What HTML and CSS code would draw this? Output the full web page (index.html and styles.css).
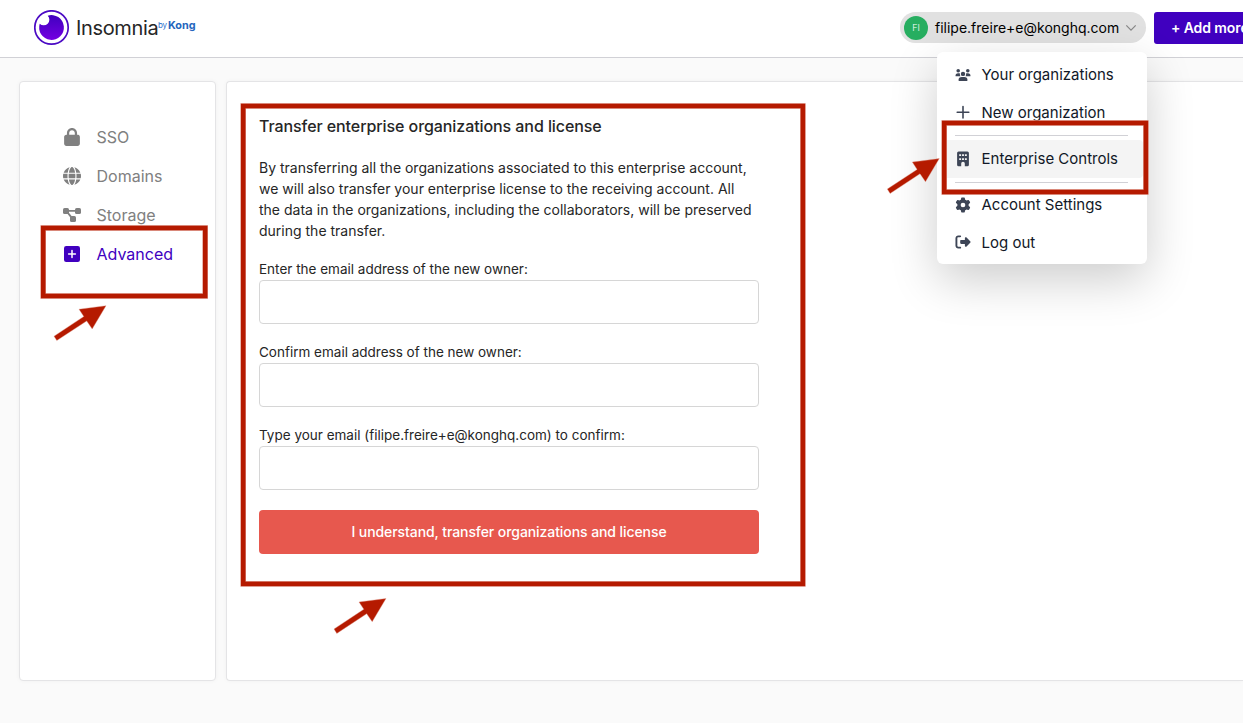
FILE: index.html
```html
<!DOCTYPE html>
<html lang="en">
<head>
<meta charset="utf-8">
<title>Insomnia by Kong</title>
<link rel="stylesheet" href="styles.css">
</head>
<body>
<header class="header">
  <div class="brand">
    <svg class="logo" width="36" height="36" viewBox="0 0 36 36">
      <defs><linearGradient id="g" x1="0" y1="0" x2="0" y2="1"><stop offset="0" stop-color="#4000bf"/><stop offset="1" stop-color="#7400e1"/></linearGradient></defs>
      <circle cx="17.500" cy="17.500" r="16.700" fill="#fff" stroke="#4b0ac4" stroke-width="1.700"/>
      <path d="M13.700 5.700A12.400 12.400 0 1 1 5.700 13.700A5.200 5.200 0 1 0 13.700 5.700Z" fill="url(#g)"/>
    </svg>
    <span class="brand-name">Insomnia</span><span class="brand-by">by</span><span class="brand-kong">Kong</span>
  </div>
  <div class="account">
    <span class="avatar">FI</span>
    <span class="account-email">filipe.freire+e@konghq.com</span>
    <svg class="chevron" width="12" height="8" viewBox="0 0 12 8"><path d="M1.300 1.300L6 6.200l4.700-4.900" fill="none" stroke="#888" stroke-width="1.200"/></svg>
    <nav class="menu">
      <a class="menu-item"><svg width="16" height="16" viewBox="0 0 16 16" fill="#3d4556"><circle cx="3.200" cy="3.700" r="1.800"/><circle cx="12.800" cy="3.700" r="1.800"/><circle cx="8" cy="6.900" r="2.200"/><path d="M.5 8.900a2.600 2.600 0 0 1 2.600-2.600h1.100q.5 0 .8.2a3.200 3.200 0 0 0 .5 2.800H1a.5.5 0 0 1-.5-.4zM15.500 8.900a2.600 2.600 0 0 0-2.600-2.600h-1.100q-.5 0-.8.2a3.200 3.200 0 0 1-.5 2.800H15a.5.5 0 0 0 .5-.4zM3.500 13.300a3.300 3.300 0 0 1 3.300-3.300h2.400a3.300 3.300 0 0 1 3.300 3.300q0 .7-.7.7H4.200q-.7 0-.7-.7z"/></svg><span>Your organizations</span></a>
      <a class="menu-item"><svg width="16" height="16" viewBox="0 0 16 16"><path d="M8 2.500v11.500M2.200 8.250h11.600" stroke="#3d4556" stroke-width="1.600" stroke-linecap="round"/></svg><span>New organization</span></a>
      <hr class="rule">
      <a class="menu-item active"><svg width="16" height="16" viewBox="0 0 16 16"><path fill="#3d4556" fill-rule="evenodd" d="M3.600.6h8.800q1.500 0 1.500 1.500v11.600q0 1.500-1.500 1.500H9.800v-2.600a1.800 1.800 0 0 0-3.600 0v2.600H3.600q-1.500 0-1.500-1.500V2.100Q2.100.6 3.600.6zM4.200 3.200v1.700h1.900V3.200zM7.050 3.200v1.700h1.900V3.200zM9.900 3.200v1.700h1.900V3.200zM4.200 7.200v1.700h1.900V7.200zM7.050 7.200v1.700h1.900V7.200zM9.900 7.200v1.700h1.900V7.200z"/></svg><span>Enterprise Controls</span></a>
      <hr class="rule">
      <a class="menu-item"><svg width="16" height="16" viewBox="-16 -16 544 544"><path fill="#3d4556" d="M495.900 166.600c3.200 8.700.5 18.400-6.400 24.600l-43.300 39.400c1.100 8.300 1.700 16.800 1.700 25.400s-.6 17.100-1.700 25.400l43.300 39.400c6.900 6.200 9.600 15.900 6.400 24.600c-4.400 11.900-9.700 23.300-15.800 34.300l-4.700 8.100c-6.600 11-14 21.400-22.100 31.200c-5.900 7.200-15.700 9.600-24.500 6.800l-55.700-17.700c-13.400 10.300-28.200 18.900-44 25.400l-12.500 57.100c-2 9.100-9 16.300-18.200 17.800c-13.800 2.300-28 3.500-42.500 3.500s-28.700-1.200-42.500-3.500c-9.200-1.500-16.200-8.700-18.200-17.800l-12.500-57.100c-15.800-6.500-30.600-15.100-44-25.400L83.100 425.900c-8.800 2.800-18.600.3-24.500-6.800c-8.100-9.800-15.500-20.200-22.100-31.200l-4.700-8.100c-6.100-11-11.400-22.400-15.800-34.300c-3.200-8.700-.5-18.400 6.400-24.600l43.300-39.400C64.600 273.100 64 264.600 64 256s.6-17.100 1.700-25.400L22.400 191.200c-6.900-6.200-9.600-15.900-6.400-24.600c4.400-11.900 9.700-23.300 15.800-34.300l4.700-8.100c6.600-11 14-21.400 22.100-31.200c5.900-7.200 15.700-9.600 24.500-6.800l55.700 17.700c13.400-10.300 28.200-18.900 44-25.400l12.500-57.100c2-9.100 9-16.300 18.200-17.800C227.300 1.200 241.500 0 256 0s28.700 1.200 42.500 3.500c9.200 1.500 16.200 8.700 18.200 17.800l12.500 57.100c15.800 6.500 30.600 15.100 44 25.400l55.700-17.700c8.800-2.800 18.600-.3 24.500 6.800c8.100 9.800 15.500 20.200 22.100 31.200l4.700 8.100c6.100 11 11.400 22.400 15.800 34.300zM256 336a80 80 0 1 0 0-160 80 80 0 1 0 0 160z"/></svg><span>Account Settings</span></a>
      <a class="menu-item"><svg width="16" height="16" viewBox="-16 -16 544 544"><path fill="#3d4556" d="M377.900 105.900L500.700 228.700c7.200 7.200 11.300 17.100 11.300 27.300s-4.100 20.100-11.300 27.300L377.900 406.100c-6.400 6.400-15 9.900-24 9.900c-18.700 0-33.900-15.200-33.900-33.900l0-62.100-128 0c-17.700 0-32-14.300-32-32l0-64c0-17.700 14.300-32 32-32l128 0 0-62.100c0-18.700 15.200-33.900 33.900-33.900c9 0 17.600 3.600 24 9.900zM160 96L96 96c-17.700 0-32 14.300-32 32l0 256c0 17.700 14.300 32 32 32l64 0c17.700 0 32 14.300 32 32s-14.300 32-32 32l-64 0c-53 0-96-43-96-96L0 128C0 75 43 32 96 32l64 0c17.700 0 32 14.300 32 32s-14.300 32-32 32z"/></svg><span>Log out</span></a>
    </nav>
  </div>
  <button class="add-button">+ Add more</button>
</header>
<main class="main">
  <aside class="sidebar">
    <a class="side-item"><svg width="18" height="18" viewBox="-32 0 512 512"><path fill="currentColor" d="M400 192h-32v-48C368 64.500 303.500 0 224 0S80 64.500 80 144v48H64c-35.300 0-64 28.700-64 64v192c0 35.300 28.700 64 64 64h320c35.300 0 64-28.700 64-64V256c0-35.300-20-62-48-64zM144 192v-48c0-44.200 35.800-80 80-80s80 35.800 80 80v48z"/></svg><span>SSO</span></a>
    <a class="side-item"><svg width="18" height="18" viewBox="0 0 512 512"><path fill="currentColor" d="M352 256c0 22.200-1.200 43.600-3.300 64H163.300c-2.200-20.400-3.300-41.800-3.300-64s1.200-43.600 3.300-64H348.700c2.200 20.400 3.300 41.800 3.300 64zm28.800-64H503.900c5.300 20.500 8.100 41.900 8.100 64s-2.800 43.500-8.100 64H380.800c2.100-20.600 3.200-42 3.200-64s-1.100-43.400-3.200-64zm112.600-32H376.700c-10-63.900-29.800-117.400-55.300-151.600c78.300 20.700 142 77.500 171.900 151.600zm-149.100 0H167.700c6.100-36.400 15.500-68.600 27-94.700c10.500-23.600 22.200-40.700 33.500-51.500C239.400 3.200 248.700 0 256 0s16.600 3.200 27.800 13.800c11.300 10.800 23 27.900 33.500 51.500c11.600 26 20.900 58.200 27 94.700zm-209 0H18.600C48.600 85.900 112.200 29.100 190.600 8.400C165.100 42.600 145.300 96.100 135.300 160zM8.100 192H131.200c-2.100 20.600-3.200 42-3.200 64s1.100 43.400 3.200 64H8.100C2.800 299.500 0 278.100 0 256s2.800-43.500 8.100-64zM194.700 446.600c-11.600-26-20.900-58.200-27-94.600H344.300c-6.100 36.400-15.500 68.600-27 94.600c-10.500 23.600-22.200 40.700-33.500 51.500C272.600 508.800 263.300 512 256 512s-16.600-3.200-27.800-13.800c-11.300-10.800-23-27.900-33.500-51.500zM135.300 352c10 63.900 29.800 117.400 55.300 151.600C112.200 482.900 48.600 426.100 18.600 352H135.300zm358.100 0c-30 74.100-93.600 130.900-171.900 151.600c25.500-34.200 45.200-87.700 55.300-151.600H493.400z"/></svg><span>Domains</span></a>
    <a class="side-item"><svg width="18" height="18" viewBox="0 0 18 18" fill="currentColor"><rect x="0" y="2" width="6" height="6" rx="1.600"/><rect x="12" y="2" width="6" height="6" rx="1.600"/><rect x="7" y="10" width="6" height="6" rx="1.600"/><path d="M5 4.900h8M4.600 6.500l4 5.200" stroke="currentColor" stroke-width="1.900"/></svg><span>Storage</span></a>
    <a class="side-item selected"><svg width="18" height="18" viewBox="0 0 18 18"><rect x="1" y="1" width="16" height="16" rx="2.200" fill="currentColor"/><path d="M9 5.600v6.800M5.600 9h6.800" stroke="#fff" stroke-width="1.500" stroke-linecap="round"/></svg><span>Advanced</span></a>
  </aside>
  <section class="panel">
    <form class="form">
      <h1 class="title">Transfer enterprise organizations and license</h1>
      <p class="text">By transferring all the organizations associated to this enterprise account,<br>we will also transfer your enterprise license to the receiving account. All<br>the data in the organizations, including the collaborators, will be preserved<br>during the transfer.</p>
      <label class="field"><span>Enter the email address of the new owner:</span><input class="input" type="text"></label>
      <label class="field"><span>Confirm email address of the new owner:</span><input class="input" type="text"></label>
      <label class="field"><span>Type your email (filipe.freire+e@konghq.com) to confirm:</span><input class="input" type="text"></label>
      <button class="submit" type="button">I understand, transfer organizations and license</button>
    </form>
  </section>
</main>
<svg class="annotations" width="1243" height="723" viewBox="0 0 1243 723">
  <defs><path id="arrow" d="M0 0L-27 3.500L-22.200 10.800L-52 30.500L-49.200 34.900L-19.300 15.200L-13.800 23.200Z"/></defs>
  <g fill="none" stroke="#e09a8c" stroke-width="5.600">
    <rect x="43.200" y="228" width="162" height="68"/><rect x="243.200" y="106" width="559.700" height="477.900"/><rect x="944.200" y="123" width="201.700" height="69"/>
  </g>
  <g fill="none" stroke="#b51a00" stroke-width="4.500">
    <rect x="43.200" y="228" width="162" height="68"/><rect x="243.200" y="106" width="559.700" height="477.900"/><rect x="944.200" y="123" width="201.700" height="69"/>
  </g>
  <g fill="#b51a00" stroke="#e09a8c" stroke-width=".4"><use href="#arrow" x="106" y="305.700"/><use href="#arrow" x="386" y="598.500"/><use href="#arrow" x="939.300" y="158.600"/></g>
</svg>
</body>
</html>
```

FILE: styles.css
```css
* { box-sizing: border-box; }
body { margin: 0; width: 1243px; height: 723px; overflow: hidden; position: relative; background: #fafafa; color: #262626; font-family: Inter, "Liberation Sans", sans-serif; }
.header { display: grid; grid-template-columns: 866px 246px 1fr; height: 58px; padding-left: 34px; background: #fff; border-bottom: 1px solid #d1d1d6; }
.brand { display: flex; align-items: flex-start; padding-top: 10px; white-space: nowrap; }
.brand-name { margin-left: 6px; font-size: 20px; line-height: 36px; width: 82px; letter-spacing: -.36px; }
.brand-by { width: 10px; font-size: 8px; line-height: 10px; color: #2c6fce; margin-top: 10px; letter-spacing: -.2px; }
.brand-kong { font-size: 10.800px; line-height: 14px; font-weight: 700; color: #2465bd; margin-top: 9px; }
.account { position: relative; display: flex; align-items: center; height: 31px; margin-top: 12px; padding-left: 4px; border-radius: 16px; background: #e1e1e1; color: #000; }
.avatar { width: 24px; height: 24px; border-radius: 50%; background: #27ae60; color: #fff; font-size: 9px; font-weight: 300; line-height: 24px; text-align: center; }
.account-email { margin-left: 7px; width: 185px; font-size: 14px; line-height: 20px; white-space: nowrap; }
.chevron { margin-left: 5px; }
.add-button { margin: 12px 0 0 8px; height: 32px; padding: 0 0 0 17px; border: 0; border-radius: 3px 0 0 3px; background: #4000bf; color: #fff; font: 600 14px/32px Inter, sans-serif; letter-spacing: -.1px; text-align: left; white-space: nowrap; overflow: hidden; }
.menu { position: absolute; left: 37px; top: 40px; z-index: 2; width: 210px; height: 212px; padding: 4px; border-radius: 6px; background: #fff; box-shadow: 0 16px 48px rgba(0,0,0,.2); color: #111827; }
.menu-item { display: flex; align-items: center; height: 37.500px; padding-left: 13.500px; gap: 11px; font-size: 15px; white-space: nowrap; border-radius: 4px; }
.menu-item.active { background: #f4f4f4; height: 38px; }
.rule { height: 1px; border: 0; margin: 4px 15px 3.500px 14px; background: #d1d1d6; }
.main { display: grid; grid-template-columns: 197px 1fr; gap: 10px; padding: 23px 0 0 19px; }
.sidebar, .panel { height: 600px; background: #fff; border: 1px solid #e4e4e6; border-radius: 4px; box-shadow: 0 0 4px rgba(0,0,0,.04); }
.panel { border-right: 0; border-radius: 4px 0 0 4px; padding: 32px; }
.sidebar { padding: 35px 0 0 43px; }
.side-item { display: flex; align-items: center; gap: 15.500px; height: 39px; font-size: 16px; color: #808080; white-space: nowrap; }
.side-item.selected { color: #4000bf; }
.form { width: 500px; }
.title { margin: 0; font-size: 16px; line-height: 24px; font-weight: 500; letter-spacing: -.08px; white-space: nowrap; }
.text { margin: 19px 0 17px; font-size: 14px; line-height: 21px; white-space: nowrap; }
.field { display: flex; flex-direction: column; height: 66px; margin-bottom: 17px; font-size: 13.500px; line-height: 22px; white-space: nowrap; }
.input { width: 500px; height: 44px; border: 1px solid #d6d6d6; border-radius: 4px; background: #fff; outline: 0; }
.submit { display: block; width: 500px; height: 44px; margin-top: 20px; padding: 0 0 1px; border: 0; border-radius: 4px; background: #e7584e; color: #fff; font: 500 14px/43px Inter, sans-serif; letter-spacing: -.08px; }
.annotations { position: absolute; left: 0; top: 0; z-index: 3; pointer-events: none; }
```
